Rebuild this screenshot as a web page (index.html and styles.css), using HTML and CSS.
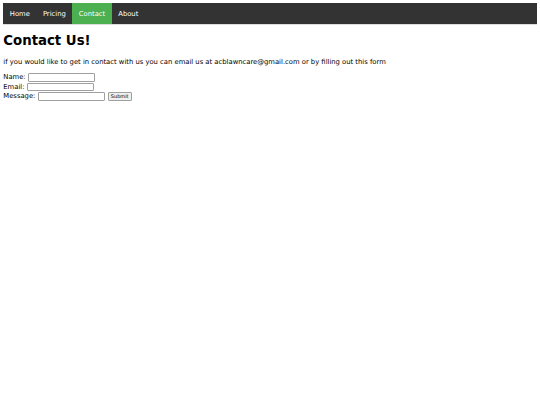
FILE: index.html
```html
<!DOCTYPE html>
<html lang="en">
  <head>
    <meta charset="UTF-8" />
    <meta name="viewport" content="width=device-width, initial-scale=1.0" />
    <title>Contact</title>

    <link rel="stylesheet" href="styles.css">
  </head>
  <body>
    <ul class="nav">
      <li><a href="#">Home</a></li>
      <li><a href="#">Pricing</a></li>
      <li><a class="active" href="#">Contact</a></li>
      <li><a href="#">About</a></li>
    </ul>

    <h1>Contact Us!</h1>
    <p>if you would like to get in contact with us you can email us at acblawncare@gmail.com or by filling out this form</p>

    <form class="contact">
      Name: <input type="text" name="name" /><br />
      Email: <input type="text" name="email" /><br />
      Message: <input type="text" name="message" />
      <input type="submit" value="Submit" />
    </form>
  </body>
</html>
```

FILE: styles.css
```css
body {
  margin: 3.3px;
  font-family: "DejaVu Sans", Verdana, sans-serif;
  font-size: 6.8px;
  color: #000;
  background: #fff;
}
.nav {
  list-style-type: none;
  margin: 0;
  padding: 0;
  overflow: hidden;
  background-color: #333;
  box-shadow: 0 0 0 0.5px #bbb;
}
.nav li {
  float: left;
}
.nav li a {
  display: block;
  color: #fff;
  text-align: center;
  padding: 6.3px 6.5px;
  text-decoration: none;
}
.nav li a.active {
  background-color: #4caf50;
}
h1 {
  font-size: 13.3px;
  margin: 9.6px 0;
}
p {
  margin: 6.8px 0;
}
.contact {
  margin-top: 7px;
  line-height: 9.3px;
}
.contact input[type="text"] {
  box-sizing: border-box;
  width: 67px;
  height: 8.6px;
  padding: 0 1px;
  font-size: 5.5px;
  border: 1px solid #a0a0a0;
  border-radius: 1px;
  vertical-align: middle;
  margin: 0;
}
.contact input[type="submit"] {
  box-sizing: border-box;
  width: 24px;
  height: 8.6px;
  padding: 0;
  font-family: "DejaVu Sans", sans-serif;
  font-size: 5px;
  color: #000;
  background: #efefef;
  border: 1px solid #a0a0a0;
  border-radius: 1px;
  vertical-align: middle;
  margin: 0 0 0 1px;
}
```
